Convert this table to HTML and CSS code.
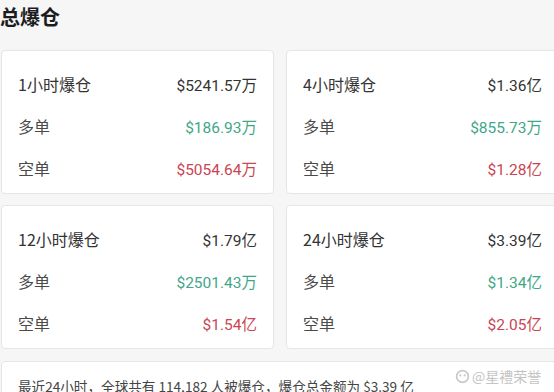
FILE: index.html
```html
<!DOCTYPE html>
<html lang="zh">
<head>
<meta charset="utf-8">
<link rel="stylesheet" href="styles.css">
</head>
<body>
<div class="page">
  <h2 class="title">总爆仓</h2>
  <div class="grid">
    <div class="card">
      <div class="row head"><span class="label">1小时爆仓</span><span class="val">$5241.57万</span></div>
      <div class="row"><span class="label sub">多单</span><span class="val long">$186.93万</span></div>
      <div class="row"><span class="label sub">空单</span><span class="val short">$5054.64万</span></div>
    </div>
    <div class="card">
      <div class="row head"><span class="label">4小时爆仓</span><span class="val">$1.36亿</span></div>
      <div class="row"><span class="label sub">多单</span><span class="val long">$855.73万</span></div>
      <div class="row"><span class="label sub">空单</span><span class="val short">$1.28亿</span></div>
    </div>
    <div class="card">
      <div class="row head"><span class="label">12小时爆仓</span><span class="val">$1.79亿</span></div>
      <div class="row"><span class="label sub">多单</span><span class="val long">$2501.43万</span></div>
      <div class="row"><span class="label sub">空单</span><span class="val short">$1.54亿</span></div>
    </div>
    <div class="card">
      <div class="row head"><span class="label">24小时爆仓</span><span class="val">$3.39亿</span></div>
      <div class="row"><span class="label sub">多单</span><span class="val long">$1.34亿</span></div>
      <div class="row"><span class="label sub">空单</span><span class="val short">$2.05亿</span></div>
    </div>
  </div>
  <div class="summary">最近24小时，全球共有 114,182 人被爆仓，爆仓总金额为 $3.39 亿</div>
</div>
<div class="watermark"><svg width="15" height="15" viewBox="0 0 14 14"><circle cx="7" cy="7" r="5.5" fill="none" stroke="#c9c9c9" stroke-width="1.6"/><circle cx="5" cy="6" r="1" fill="#c9c9c9"/><circle cx="9" cy="6" r="1" fill="#c9c9c9"/></svg><span>@星禮荣誉</span></div>
</body>
</html>
```
FILE: styles.css
```css
html, body {
  margin: 0;
  padding: 0;
}
body {
  width: 554px;
  height: 392px;
  overflow: hidden;
  background: #f6f6f7;
  font-family: "Noto Sans CJK SC", "Noto Sans", sans-serif;
  position: relative;
}
.page {
  width: 600px;
  padding-left: 1px;
}
.title {
  margin: 0;
  padding-top: 4px;
  margin-left: -1px;
  height: 50px;
  box-sizing: border-box;
  font-size: 20px;
  line-height: 26px;
  font-weight: 700;
  color: #1d1d1f;
}
.grid {
  display: grid;
  grid-template-columns: 273px 273px;
  column-gap: 12px;
  row-gap: 11px;
}
.card {
  background: #fff;
  border: 1px solid #e6e6e8;
  border-radius: 4px;
  padding: 19px 16px 11px;
  display: flex;
  flex-direction: column;
  gap: 14px;
}
.row {
  display: flex;
  justify-content: space-between;
  align-items: center;
  height: 28px;
}
.label {
  font-size: 16px;
  color: #333;
}
.label.sub {
  color: #4a4a4a;
}
.val {
  font-family: "Roboto", "Noto Sans CJK SC", sans-serif;
  font-size: 15.5px;
  color: #333;
}
.val.long { color: #3fa788; }
.val.short { color: #c94552; }
.summary {
  margin-top: 12px;
  background: #fff;
  border: 1px solid #e6e6e8;
  border-radius: 4px;
  padding: 14px 16px;
  font-size: 13.6px;
  line-height: 20px;
  color: #444;
  width: 600px;
}
.watermark {
  position: absolute;
  left: 455px;
  top: 366px;
  display: flex;
  align-items: center;
  gap: 2px;
  font-size: 14px;
  color: #c4c4c4;
  text-shadow: 0 0 1px #fff;
}
```
